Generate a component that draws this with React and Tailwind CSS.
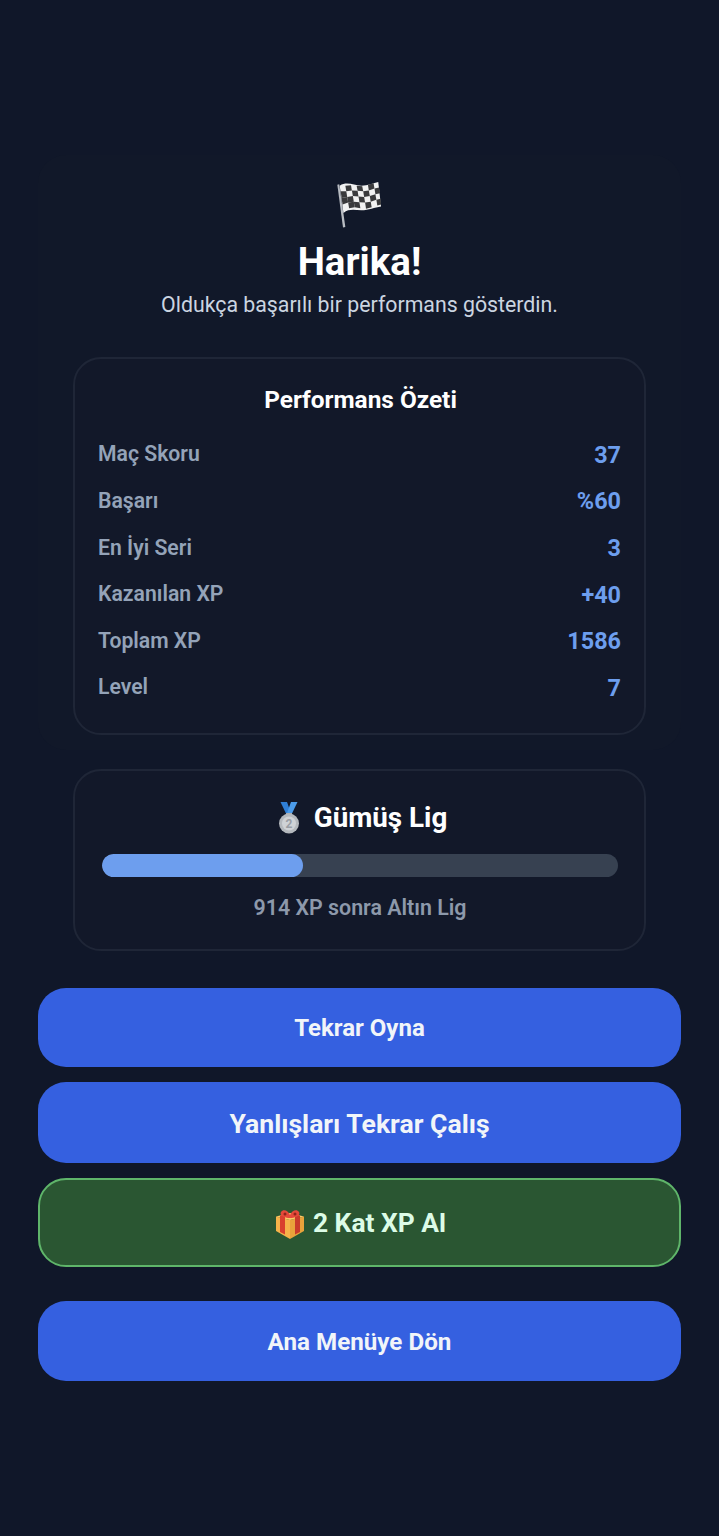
const FlagIcon = () => (
  <svg width="47" height="47" viewBox="0 0 50 50" className="block">
    <path d="M2.5 4 L4.5 3.5 L11 49 L8.5 49.5 Z" fill="#b8bcc2" />
    <path d="M5 5 C13 0 20 5 28 5 C35 5 41 2 46 1 L49 27 C42 28 36 31 28 31 C21 31 15 29 9 34 Z" fill="#f2f2f2" />
    <g fill="#3a3a3c">
      <path d="M11 5 L17 4.5 L18 10 L12 11 Z" />
      <path d="M23 5 L29 5.5 L30 11 L24 10.5 Z" />
      <path d="M35 4 L41 2.5 L42 8 L36 10 Z" />
      <path d="M6 11 L12 11 L13 17 L7 18 Z" />
      <path d="M18 10 L24 10.5 L25 16.5 L19 16 Z" />
      <path d="M30 11 L36 10 L37 16 L31 17 Z" />
      <path d="M42 8 L47 7 L48 13 L43 14 Z" />
      <path d="M13 17 L19 16 L20 22 L14 23 Z" />
      <path d="M25 16.5 L31 17 L32 23 L26 22.5 Z" />
      <path d="M37 16 L43 14 L44 20 L38 22 Z" />
      <path d="M7 18 L13 17 L14 23 L8 25 Z" />
      <path d="M20 22 L26 22.5 L27 29 L21 28 Z" />
      <path d="M32 23 L38 22 L39 28 L33 29.5 Z" />
      <path d="M44 20 L48.5 19 L49 25 L45 26 Z" />
      <path d="M14 23 L20 22 L21 28 L15 29 Z" />
    </g>
  </svg>
);

const MedalIcon = () => (
  <svg width="22" height="32" viewBox="0 0 22 32" className="block">
    <path d="M2.5 0 L9 0 L13 11 L8.5 12.5 Z" fill="#2f7fd6" />
    <path d="M19.5 0 L13 0 L9 11 L13.5 12.5 Z" fill="#4b9bea" />
    <path d="M8 11 H14 V14 H8 Z" fill="#a9adb3" />
    <circle cx="11" cy="21.5" r="10" fill="#b4b8bd" />
    <circle cx="11" cy="21.5" r="7" fill="#cfd2d6" />
    <text x="11" y="26" textAnchor="middle" fontSize="12" fontWeight="700" fill="#9a9ea5" fontFamily="Roboto, sans-serif">2</text>
  </svg>
);

const GiftIcon = () => (
  <svg width="28" height="29" viewBox="0 0 28 29" className="block">
    <path d="M14 10 L28 6.5 V21 L14 29 Z" fill="#e9a23b" />
    <path d="M14 10 L0 6.5 V21 L14 29 Z" fill="#f6b24a" />
    <path d="M14 10 L28 6.5 L14 3 L0 6.5 Z" fill="#fcc765" />
    <path d="M4 5.5 L9 4.5 L9 24.5 L4 22 Z" fill="#d9402e" />
    <path d="M19 4.5 L24 5.5 L24 22 L19 24.5 Z" fill="#c93a2a" />
    <path d="M5 2 C7 -1 12 0 14 5 C16 0 21 -1 23 2 C25 6 19 8 14 8 C9 8 3 6 5 2 Z" fill="#e5483a" />
    <circle cx="9" cy="4" r="1.5" fill="#8f241b" />
    <circle cx="19" cy="4" r="1.5" fill="#8f241b" />
  </svg>
);

const stats = [
  { label: "Maç Skoru", value: "37" },
  { label: "Başarı", value: "%60" },
  { label: "En İyi Seri", value: "3" },
  { label: "Kazanılan XP", value: "+40" },
  { label: "Toplam XP", value: "1586" },
  { label: "Level", value: "7" },
];

const App = () => {
  return (
    <div className="min-h-[1536px] bg-[#101729] px-[38px] pt-[155px] font-['Roboto',sans-serif]">
      {/* Sonuç kartı */}
      <div className="rounded-[28px] bg-[#111829] px-[35px] pt-[26px] pb-[15px]">
        <div className="flex justify-center pr-[2px]">
          <FlagIcon />
        </div>
        <h1 className="mt-[10px] text-center text-[38.5px] leading-[48px] font-bold text-white">Harika!</h1>
        <p className="mt-[4px] text-center text-[21.3px] leading-[30px] text-[#cbd5e1]">
          Oldukça başarılı bir performans gösterdin.
        </p>

        <div className="mt-[37px] rounded-[28px] border-2 border-[#1f2637] bg-[#121829] px-[23px] pt-[28px] pb-[22px]">
          <h2 className="pl-[2px] text-center text-[24.4px] leading-[26px] font-bold text-white">Performans Özeti</h2>
          <div className="mt-[18px] flex flex-col">
            {stats.map((s) => (
              <div key={s.label} className="flex h-[46.6px] items-center justify-between">
                <span className="text-[21.2px] font-semibold text-[#94a3b8]">{s.label}</span>
                <span className="mt-[2px] text-[23.4px] font-bold text-[#6d9eee]">{s.value}</span>
              </div>
            ))}
          </div>
        </div>
      </div>

      {/* Lig */}
      <div className="mx-[35px] mt-[19px] rounded-[28px] border-2 border-[#1f2637] bg-[#121829] pt-[29px] pr-[26px] pb-[27px] pl-[27px]">
        <div className="flex items-center justify-center gap-[14px] pl-[5px]">
          <MedalIcon />
          <span className="text-[27.8px] leading-[36px] font-bold text-white">Gümüş Lig</span>
        </div>
        <div className="mt-[18px] h-[23px] overflow-hidden rounded-full bg-[#374151]">
          <div className="h-full w-[39%] rounded-full bg-[#6d9eee]" />
        </div>
        <p className="mt-[17px] text-center text-[21.4px] leading-[28px] font-semibold text-[#8d99ab]">
          914 XP sonra Altın Lig
        </p>
      </div>

      {/* Butonlar */}
      <div className="mt-[37px] flex flex-col">
        <button className="h-[79px] rounded-[28px] bg-[#3560e0] pt-[2px] text-[24px] font-bold text-[#f1f5f9]">Tekrar Oyna</button>
        <button className="mt-[15px] h-[81px] rounded-[28px] bg-[#3560e0] pt-[3px] text-[26.6px] font-bold text-[#f1f5f9]">
          Yanlışları Tekrar Çalış
        </button>
        <button className="mt-[15px] flex h-[89px] items-center justify-center gap-[9px] rounded-[28px] border-2 border-[#5fb56a] bg-[#2a5632] pt-[4px] pl-[3px] text-[26.4px] font-bold text-[#dcfce7]">
          <GiftIcon />
          <span>2 Kat XP Al</span>
        </button>
        <button className="mt-[34px] h-[80px] rounded-[28px] bg-[#3560e0] pt-[3px] text-[24.2px] font-bold text-[#f1f5f9]">
          Ana Menüye Dön
        </button>
      </div>
    </div>
  );
};

export default App;
